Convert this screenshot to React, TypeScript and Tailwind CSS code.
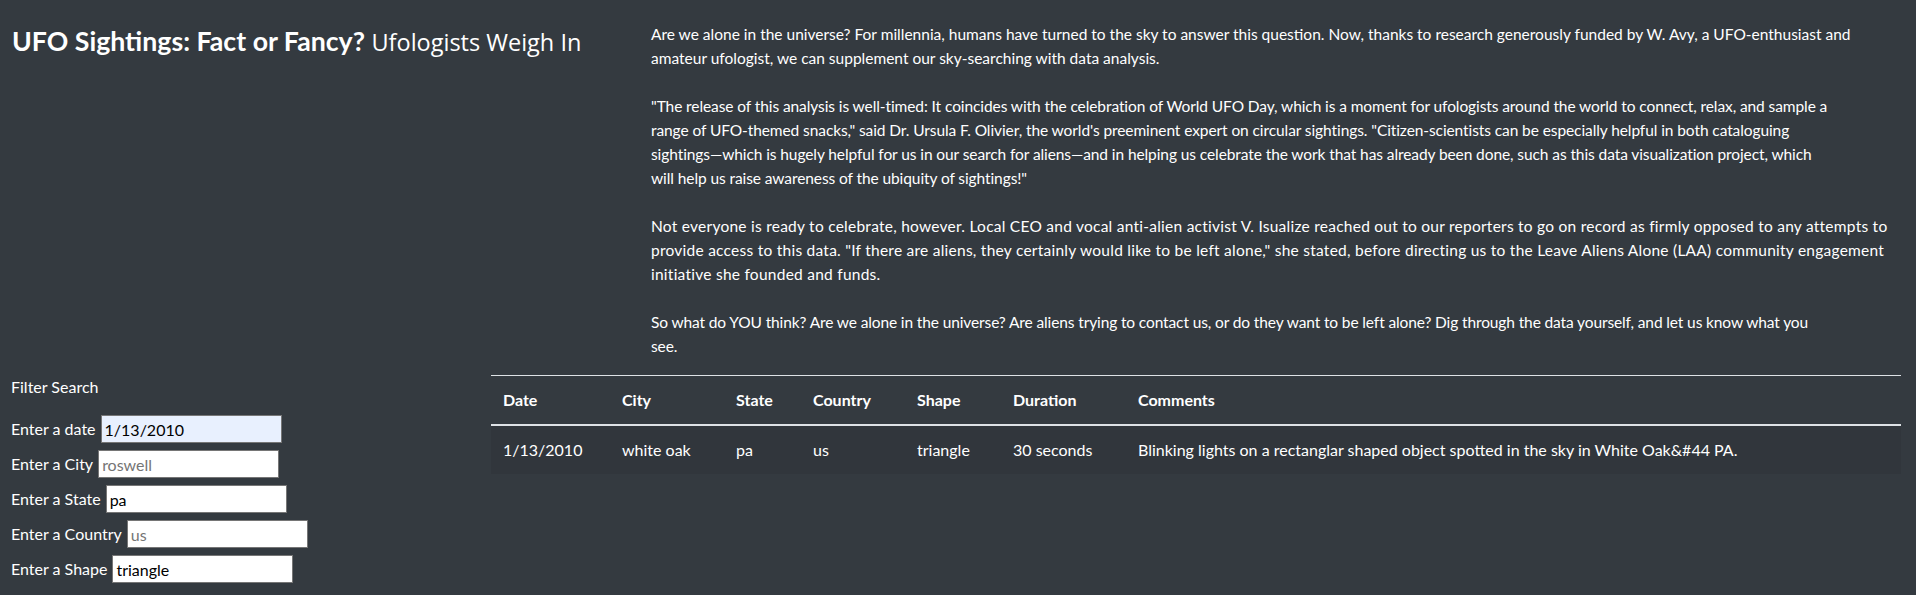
import React from 'react';

// each paragraph: its lines (as wrapped in the article column) and a small tracking tweak
const paragraphs: { lines: string[]; tracking: string }[] = [
  {
    tracking: '',
    lines: [
      'Are we alone in the universe? For millennia, humans have turned to the sky to answer this question. Now, thanks to research generously funded by W. Avy, a UFO-enthusiast and',
      'amateur ufologist, we can supplement our sky-searching with data analysis.',
    ],
  },
  {
    tracking: 'tracking-[-0.09px]',
    lines: [
      '"The release of this analysis is well-timed: It coincides with the celebration of World UFO Day, which is a moment for ufologists around the world to connect, relax, and sample a',
      'range of UFO-themed snacks," said Dr. Ursula F. Olivier, the world\'s preeminent expert on circular sightings. "Citizen-scientists can be especially helpful in both cataloguing',
      'sightings\u2014which is hugely helpful for us in our search for aliens\u2014and in helping us celebrate the work that has already been done, such as this data visualization project, which',
      'will help us raise awareness of the ubiquity of sightings!"',
    ],
  },
  {
    tracking: 'tracking-[0.25px]',
    lines: [
      'Not everyone is ready to celebrate, however. Local CEO and vocal anti-alien activist V. Isualize reached out to our reporters to go on record as firmly opposed to any attempts to',
      'provide access to this data. "If there are aliens, they certainly would like to be left alone," she stated, before directing us to the Leave Aliens Alone (LAA) community engagement',
      'initiative she founded and funds.',
    ],
  },
  {
    tracking: 'tracking-[-0.12px]',
    lines: [
      'So what do YOU think? Are we alone in the universe? Are aliens trying to contact us, or do they want to be left alone? Dig through the data yourself, and let us know what you',
      'see.',
    ],
  },
];

const filters = [
  { label: 'Enter a date', value: '1/13/2010', placeholder: '', autofill: true },
  { label: 'Enter a City', value: '', placeholder: 'roswell', autofill: false },
  { label: 'Enter a State', value: 'pa', placeholder: '', autofill: false },
  { label: 'Enter a Country', value: '', placeholder: 'us', autofill: false },
  { label: 'Enter a Shape', value: 'triangle', placeholder: '', autofill: false },
];

const columns = [
  { name: 'Date', w: 'w-[119px]' },
  { name: 'City', w: 'w-[114px]' },
  { name: 'State', w: 'w-[77px]' },
  { name: 'Country', w: 'w-[104px]' },
  { name: 'Shape', w: 'w-[96px]' },
  { name: 'Duration', w: 'w-[125px]' },
  { name: 'Comments', w: '' },
];

const rows = [
  ['1/13/2010', 'white oak', 'pa', 'us', 'triangle', '30 seconds', 'Blinking lights on a rectanglar shaped object spotted in the sky in White Oak&#44 PA.'],
];

export default function App() {
  return (
    <div className="min-h-[595px] bg-[#343a40] text-white font-['Lato','Liberation_Sans',sans-serif] text-[16px] leading-6">
      {/* Header + article */}
      <div className="flex">
        <div className="w-[640px] shrink-0 pl-[12px] pt-[25px]">
          <h1 className="text-[26.7px] font-bold leading-[1.2] whitespace-nowrap">
            UFO Sightings: Fact or Fancy?{' '}
            <small className="font-['Open_Sans',sans-serif] text-[23.5px] font-normal">Ufologists Weigh In</small>
          </h1>
        </div>
        <div className="flex-1 pl-[11px] pr-[15px] pt-[22px] pb-[17px] text-[15.5px]">
          {paragraphs.map((p, i) => (
            <p key={i} className={`whitespace-nowrap ${p.tracking} ${i < paragraphs.length - 1 ? 'mb-6' : ''}`}>
              {p.lines.map((line, j) => (
                <React.Fragment key={j}>
                  {line}
                  {j < p.lines.length - 1 && <br />}
                </React.Fragment>
              ))}
            </p>
          ))}
        </div>
      </div>

      {/* Filters + table */}
      <div className="flex">
        <div className="w-[491px] shrink-0 pl-[11px]">
          <p>Filter Search</p>
          <ul className="mt-4 flex flex-col gap-[7px]">
            {filters.map((f) => (
              <li key={f.label} className="flex items-center">
                <label className="whitespace-nowrap">{f.label}</label>
                <input
                  type="text"
                  defaultValue={f.value}
                  placeholder={f.placeholder}
                  className={`ml-[5px] h-[28px] w-[181px] border border-[#767676] px-[3px] text-[16px] text-black placeholder:text-[#757575] outline-none ${
                    f.autofill ? 'bg-[#e8f0fe]' : 'bg-white'
                  }`}
                />
              </li>
            ))}
          </ul>
        </div>
        <div className="w-[1410px] shrink-0">
          <table className="w-full border-collapse text-left">
            <thead>
              <tr className="border-t border-[#dee2e6]">
                {columns.map((c) => (
                  <th key={c.name} className={`${c.w} px-3 py-3 font-bold border-b-2 border-[#dee2e6]`}>
                    {c.name}
                  </th>
                ))}
              </tr>
            </thead>
            <tbody>
              {rows.map((r, i) => (
                <tr key={i} className="bg-[#31363c]">
                  {r.map((cell, j) => (
                    <td key={j} className="px-3 py-3 whitespace-nowrap">
                      {cell}
                    </td>
                  ))}
                </tr>
              ))}
            </tbody>
          </table>
        </div>
      </div>
    </div>
  );
}
